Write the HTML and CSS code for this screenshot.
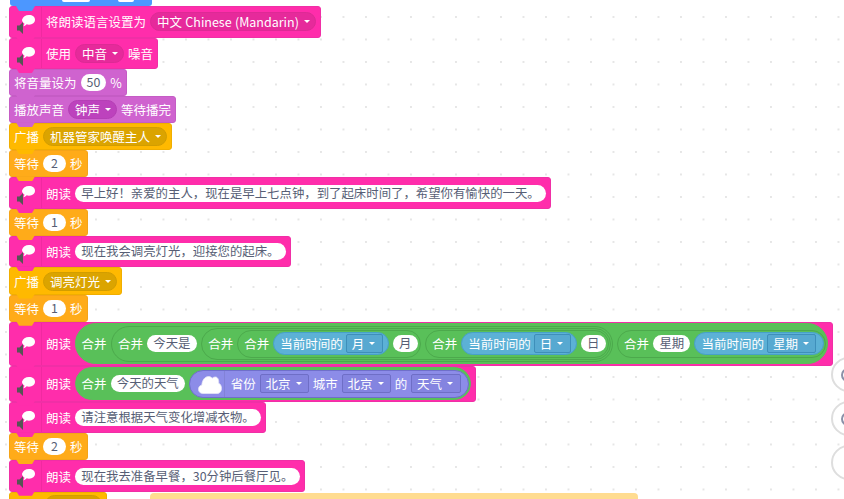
FILE: index.html
```html
<!DOCTYPE html>
<html lang="zh">
<head>
<meta charset="utf-8">
<title>积木编程</title>
<link rel="stylesheet" href="styles.css">
</head>
<body>
<svg class="defs" width="0" height="0" aria-hidden="true">
  <symbol id="speak" viewBox="0 0 31 30">
    <path d="M7 18.500h2.500l3.500-3.500v12l-3.500-3.500H7z" fill="#555"/>
    <path d="M19 8c3.600 0 6 1.900 6 4.800s-2.400 4.900-6 4.900c-.9 0-1.700-.1-2.400-.4-.8 1.100-2 1.800-3.300 2 .7-.9 1.100-2 1.100-2.900-1.600-.8-2.400-2.200-2.400-3.600C13 9.900 15.400 8 19 8z" fill="#fff"/>
  </symbol>
</svg>
<main class="canvas">
  <div class="stack">
    <div class="block blue">
      <span class="stub stub-a"></span>
      <span class="stub stub-b"></span>
    </div>
    <div class="block pink tall"><span class="ico"><svg class="ico-svg"><use href="#speak"/></svg></span><span>将朗读语言设置为</span><span class="dd dd-pink">中文 Chinese (Mandarin)<i class="caret"></i></span></div>
    <div class="block pink tall"><span class="ico"><svg class="ico-svg"><use href="#speak"/></svg></span><span>使用</span><span class="dd dd-pink">中音<i class="caret"></i></span><span>噪音</span></div>
    <div class="block purple"><span>将音量设为</span><span class="input num">50</span><span>%</span></div>
    <div class="block purple"><span>播放声音</span><span class="dd dd-purple">钟声<i class="caret"></i></span><span>等待播完</span></div>
    <div class="block yellow"><span>广播</span><span class="dd dd-yellow">机器管家唤醒主人<i class="caret"></i></span></div>
    <div class="block orange"><span>等待</span><span class="input num">2</span><span>秒</span></div>
    <div class="block pink tall"><span class="ico"><svg class="ico-svg"><use href="#speak"/></svg></span><span>朗读</span><span class="input">早上好！亲爱的主人，现在是早上七点钟，到了起床时间了，希望你有愉快的一天。</span></div>
    <div class="block orange"><span>等待</span><span class="input num">1</span><span>秒</span></div>
    <div class="block pink tall"><span class="ico"><svg class="ico-svg"><use href="#speak"/></svg></span><span>朗读</span><span class="input">现在我会调亮灯光，迎接您的起床。</span></div>
    <div class="block yellow"><span>广播</span><span class="dd dd-yellow">调亮灯光<i class="caret"></i></span></div>
    <div class="block orange"><span>等待</span><span class="input num">1</span><span>秒</span></div>

    <div class="block pink h44"><span class="ico"><svg class="ico-svg"><use href="#speak"/></svg></span><span>朗读</span>
      <span class="join outer">
        <span>合并</span>
        <span class="join">
          <span>合并</span><span class="input">今天是</span>
          <span class="join">
            <span>合并</span>
            <span class="join leaf"><span>合并</span>
              <span class="sense"><span>当前时间的</span><span class="box box-sense">月<i class="caret"></i></span></span>
              <span class="input">月</span></span>
            <span class="join leaf"><span>合并</span>
              <span class="sense"><span>当前时间的</span><span class="box box-sense">日<i class="caret"></i></span></span>
              <span class="input">日</span></span>
          </span>
        </span>
        <span class="join leaf tight"><span>合并</span><span class="input">星期</span>
          <span class="sense"><span>当前时间的</span><span class="box box-sense">星期<i class="caret"></i></span></span>
        </span>
      </span>
    </div>

    <div class="block pink h36"><span class="ico"><svg class="ico-svg"><use href="#speak"/></svg></span><span>朗读</span>
      <span class="join outer">
        <span>合并</span><span class="input">今天的天气</span>
        <span class="weather">
          <span class="w-ico"><svg class="cloud" viewBox="0 0 24 20"><path d="M5 19.500C2 19.500.5 17.500.5 15.200c0-2.300 1.600-3.900 3.400-4.200C4 6.200 7 2.500 10.500 2.500c1.500 0 2.800.7 3.700 1.700 1-.8 2-1.200 3-1.200 2.400 0 3.800 2.300 3.500 6.200 1.800.9 2.800 2.900 2.800 5.200 0 2.900-1.700 5.100-4.500 5.100z" fill="#fff" stroke="#e4e4f6" stroke-width=".8"/></svg></span>
          <span>省份</span><span class="box box-weather">北京<i class="caret"></i></span>
          <span>城市</span><span class="box box-weather">北京<i class="caret"></i></span>
          <span>的</span><span class="box box-weather">天气<i class="caret"></i></span>
        </span>
      </span>
    </div>

    <div class="block pink tall"><span class="ico"><svg class="ico-svg"><use href="#speak"/></svg></span><span>朗读</span><span class="input">请注意根据天气变化增减衣物。</span></div>
    <div class="block orange"><span>等待</span><span class="input num">2</span><span>秒</span></div>
    <div class="block pink tall"><span class="ico"><svg class="ico-svg"><use href="#speak"/></svg></span><span>朗读</span><span class="input">现在我去准备早餐，30分钟后餐厅见。</span></div>
    <div class="block yellow last"><span class="label-gap"></span><span class="dd dd-yellow dd-stub"></span></div>
  </div>

  <div class="comment"></div>

  <div class="tools">
    <span class="tool"><i class="ring"></i></span>
    <span class="tool"><i class="ring"></i></span>
    <span class="tool"></span>
  </div>
</main>
</body>
</html>
```

FILE: styles.css
```css
* { box-sizing: border-box; }

html, body {
  margin: 0;
  height: 100%;
  overflow: hidden;
}

.defs { position: absolute; }

.canvas {
  position: relative;
  width: 844px;
  height: 499px;
  overflow: hidden;
  background-color: #fff;
  background-image: radial-gradient(circle at 1px 1px, #e6e6e6 0.9px, transparent 1.2px);
  background-size: 22.5px 22.5px;
  background-position: 5px 16px;
  font-family: "Noto Sans CJK SC", "Noto Sans", sans-serif;
  font-size: 12.5px;
  line-height: 17px;
  color: #fff;
}

.stack {
  display: flex;
  flex-direction: column;
  align-items: flex-start;
  padding-left: 9px;
}

.block {
  position: relative;
  display: flex;
  flex: none;
  align-items: center;
  gap: 4px;
  height: 27.1px;
  padding: 0 4px;
  border: 1px solid;
  border-radius: 3px;
  white-space: nowrap;
}

.block::after {
  content: "";
  position: absolute;
  z-index: 2;
  left: 6px;
  bottom: -5px;
  width: 19px;
  height: 5px;
  background: inherit;
  clip-path: polygon(0 0, 100% 0, 84% 100%, 16% 100%);
}

.tall { height: 31.5px; }
.h44 { height: 44px; }
.h36 { height: 36px; }

.pink { background: #ff2dab; border-color: #f02fa6; }
.purple { background: #cf63cf; border-color: #c55cc5; }
.yellow { background: #ffb900; border-color: #f0ae00; }
.orange { background: #ffab19; border-color: #f5a418; }

.blue {
  align-items: flex-end;
  width: 142px;
  height: 6px;
  margin-left: 1px;
  padding: 0;
  background: #4c97ff;
  border: 0;
  border-radius: 0 0 3px 3px;
}

.stub {
  display: block;
  height: 2px;
  margin-bottom: 4px;
  background: #fff;
  border-radius: 0 0 6px 6px;
}
.stub-a { width: 28px; margin-left: 52px; }
.stub-b { width: 16px; margin-left: 24px; }

.last {
  align-items: flex-start;
  height: 27.1px;
  padding-top: 2px;
}

.label-gap {
  width: 27px;
  height: 17px;
}

.dd-stub { width: 57px; }

.ico {
  display: flex;
  flex: none;
  align-self: stretch;
  width: 32px;
  margin-left: -4px;
  border-right: 1px solid rgba(0, 0, 0, 0.06);
}

.ico-svg {
  width: 31px;
  height: 30px;
  margin-top: auto;
  margin-bottom: auto;
}

.input {
  display: inline-flex;
  flex: none;
  align-items: center;
  justify-content: center;
  height: 17px;
  padding: 0 6.25px;
  background: #fff;
  border-radius: 9px;
  color: #575e75;
  font-size: 12.4px;
}

.num {
  min-width: 23px;
  padding: 0 6px;
}

.dd {
  display: inline-flex;
  flex: none;
  align-items: center;
  height: 19px;
  padding: 0 5px 0 6px;
  border: 1px solid;
  border-radius: 10px;
  word-spacing: 0.5px;
}

.dd-pink { background: #e62a9b; border-color: #dd2a95; }
.dd-purple { background: #bd42bd; border-color: #b53fb5; }
.dd-yellow { background: #dba400; border-color: #d29d00; }

.caret {
  display: block;
  flex: none;
  width: 0;
  height: 0;
  margin-left: 5px;
  border-top: 3.5px solid #fff;
  border-left: 3px solid transparent;
  border-right: 3px solid transparent;
}

.join {
  display: inline-flex;
  flex: none;
  align-items: center;
  gap: 4px;
  padding: 1px 1px 1px 6.5px;
  background: #59c059;
  border: 1px solid #4ca94c;
  border-radius: 24px;
}

.join.outer {
  padding-top: 1.5px;
  padding-bottom: 1.5px;
  padding-left: 5.5px;
  border-color: #59c059;
}

.join.leaf {
  padding: 1.5px 2.500px 1.5px 6px;
}

.join.leaf.tight {
  padding-right: 1px;
}

.sense {
  display: inline-flex;
  flex: none;
  align-items: center;
  gap: 3px;
  height: 23px;
  padding: 0 5px 0 6px;
  background: #5cb1d6;
  border: 1px solid #47a0c8;
  border-radius: 12px;
}

.tight .sense {
  padding-right: 7px;
}

.box {
  display: inline-flex;
  flex: none;
  align-items: center;
  height: 19px;
  padding: 0 6.5px 0 5px;
  border: 1px solid;
  border-radius: 2px;
}

.box-sense { background: #57a9d1; border-color: #3e8fba; }
.box-weather { background: #8484e0; border-color: #6e6ec6; }

.weather {
  display: inline-flex;
  flex: none;
  align-items: center;
  gap: 3.75px;
  height: 28px;
  padding: 0 7px 0 0;
  background: #8c8ce8;
  border: 1px solid #6f6fc9;
  border-radius: 14px;
}

.w-ico {
  display: flex;
  align-items: center;
  align-self: stretch;
  width: 35px;
  padding-left: 8px;
  margin-right: 2px;
  border-right: 1px solid rgba(0, 0, 0, 0.07);
}

.cloud {
  width: 24px;
  height: 20px;
}

.comment {
  position: absolute;
  left: 150px;
  top: 493px;
  width: 488px;
  height: 12px;
  background: #ffdc90;
  border-radius: 4px;
}

.tools {
  position: absolute;
  left: 831px;
  top: 357px;
  display: flex;
  flex-direction: column;
  gap: 9px;
}

.tool {
  display: block;
  width: 35px;
  height: 35px;
  padding: 9px 0 0 8px;
  background: #fff;
  border: 2px solid #dedede;
  border-radius: 50%;
}

.ring {
  display: block;
  width: 14px;
  height: 14px;
  border: 2px solid #8a90a8;
  border-radius: 50%;
}
```
